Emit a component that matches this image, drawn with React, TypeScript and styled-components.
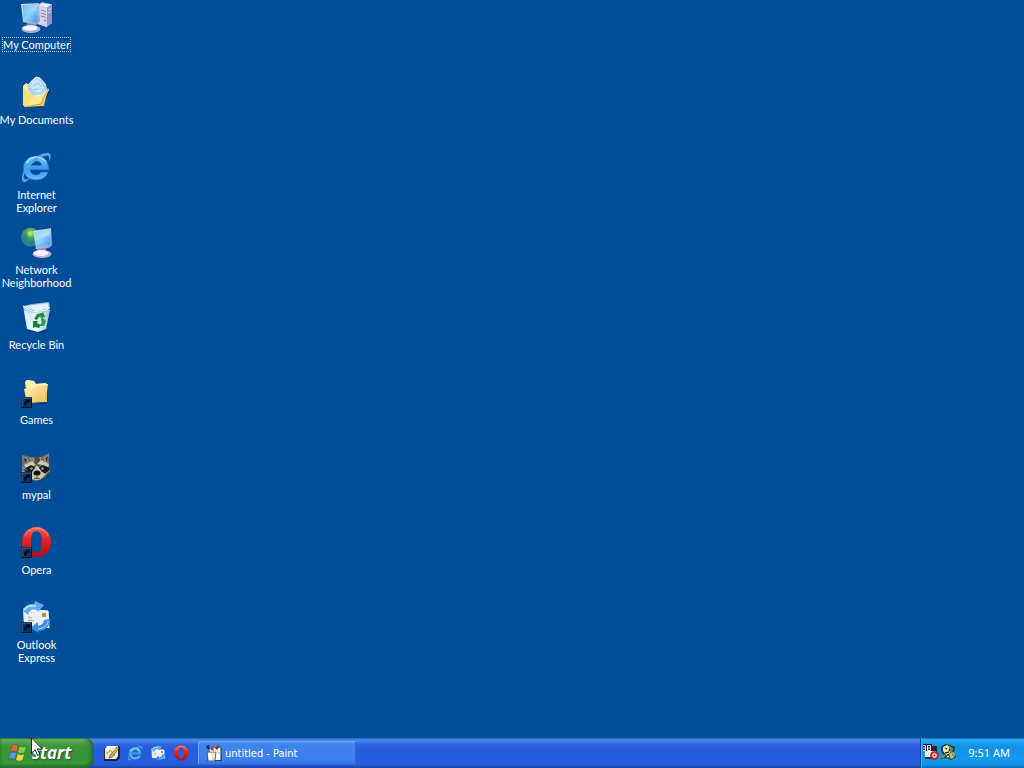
import React from "react";
import styled, { createGlobalStyle } from "styled-components";

const GlobalStyle = createGlobalStyle`
  * { box-sizing: border-box; }
  html, body { margin: 0; padding: 0; }
  body {
    font-family: Tahoma, "DejaVu Sans Condensed", "Noto Sans", sans-serif;
    font-size: 11px;
    line-height: 13px;
    color: #fff;
    background: #004e98;
  }
  button { font: inherit; color: inherit; border: 0; padding: 0; background: none; }
  svg { display: block; flex: none; }
`;

const Screen = styled.div`
  display: flex;
  flex-direction: column;
  min-height: 100vh;
  background: #004e98;
`;

const Desktop = styled.main`
  flex: 1;
`;

const IconColumn = styled.ul`
  list-style: none;
  margin: 0;
  padding: 0;
  display: grid;
  grid-auto-rows: 75px;
  justify-content: start;
  grid-template-columns: 73px;
`;

const Shortcut = styled.button`
  display: grid;
  grid-template-columns: 100%;
  justify-items: center;
  gap: 5px;
  width: 100%;
  padding-top: 1px;

  svg { margin-right: 1px; }
`;

const Label = styled.span<{ $focused?: boolean }>`
  font-family: Tahoma, Lato, sans-serif;
  white-space: pre;
  outline: ${(p) => (p.$focused ? "1px dotted #b9cfe6" : "none")};
`;

const Taskbar = styled.footer`
  display: flex;
  align-items: stretch;
  height: 30px;
  background: linear-gradient(
    #2c5cc0 0px, #4a8cf0 2px, #3a78ea 4px, #2a62e0 7px, #245cdc 12px,
    #265fe2 24px, #2459d4 27px, #1b44a8 30px
  );
`;

const StartButton = styled.button`
  display: flex;
  align-items: center;
  gap: 4px;
  width: 94px;
  padding: 0 0 0 8px;
  border-radius: 0 9px 9px 0;
  background: linear-gradient(
    #2f7a35 0px, #72b66f 2px, #51a250 4px, #3c963c 8px, #379337 20px,
    #3a9a3b 25px, #2c7c2e 30px
  );
  box-shadow: inset -4px 0 4px -1px #256b2a, inset 0 -2px 3px #24702a;
  font-family: "Open Sans", "Noto Sans", sans-serif;
  font-size: 17px;
  line-height: 24px;
  font-weight: 700;
  font-style: italic;
  text-shadow: 1px 1px 2px #1c4a1c;
`;

const QuickLaunch = styled.nav`
  display: flex;
  align-items: center;
  gap: 7px;
  padding: 0 8px 0 10px;
`;

const TaskArea = styled.div`
  flex: 1;
  display: flex;
  padding: 3px 0 3px 1px;
`;

const TaskButton = styled.button`
  display: flex;
  align-items: center;
  gap: 3px;
  width: 158px;
  padding-left: 8px;
  border-radius: 2px;
  background: linear-gradient(#5a9cf8, #3f84f0 4px, #3c80f0 19px, #3470e0);
  box-shadow: inset 1px 1px 0 #6aa5fa, inset -1px -1px 0 #2f67d8;
`;

const Tray = styled.section`
  display: flex;
  align-items: center;
  width: 104px;
  padding: 0 0 2px 2px;
  border-left: 1px solid #0b3f9c;
  background: linear-gradient(
    #0f6cc0 0px, #2fb4f8 2px, #179cf0 5px, #1290e8 9px, #149aee 23px,
    #128fe4 27px, #0f68b8 30px
  );
  box-shadow: inset 1px 0 0 #2cb8f4;
`;

const TrayIcons = styled.div`
  display: flex;
  gap: 1px;
`;

const Clock = styled.time`
  flex: 1;
  padding-right: 14px;
  text-align: right;
  white-space: nowrap;
  font-family: Tahoma, "Noto Sans", sans-serif;
`;

const Pointer = styled.div`
  position: fixed;
  left: 31px;
  bottom: 12px;
  pointer-events: none;
`;

const Defs = () => (
  <svg width="0" height="0" style={{ position: "absolute" }} aria-hidden="true">
    <defs>
      <linearGradient id="screen" x1="0" y1="0" x2="1" y2="1">
        <stop offset="0" stopColor="#3fa4f0" /><stop offset=".5" stopColor="#8ad4fc" /><stop offset="1" stopColor="#3a8ce8" />
      </linearGradient>
      <linearGradient id="metal" x1="0" y1="0" x2="1" y2="1">
        <stop offset="0" stopColor="#dfe6fb" /><stop offset="1" stopColor="#8d97c8" />
      </linearGradient>
      <linearGradient id="folder" x1="0" y1="0" x2="1" y2="1">
        <stop offset="0" stopColor="#fff3b4" /><stop offset="1" stopColor="#edbd57" />
      </linearGradient>
      <linearGradient id="ie" x1="0" y1="0" x2="0" y2="1">
        <stop offset="0" stopColor="#79c9fb" /><stop offset=".5" stopColor="#3b9df0" /><stop offset="1" stopColor="#63bdf8" />
      </linearGradient>
      <linearGradient id="opera" x1="0" y1="0" x2="0" y2="1">
        <stop offset="0" stopColor="#ff6b60" /><stop offset=".4" stopColor="#e82420" /><stop offset="1" stopColor="#b80c10" />
      </linearGradient>
      <radialGradient id="globe" cx=".5" cy=".3">
        <stop offset="0" stopColor="#c5f59c" /><stop offset=".5" stopColor="#46a83f" /><stop offset="1" stopColor="#2a7f8c" />
      </radialGradient>
      <linearGradient id="bin" x1="0" y1="0" x2="1" y2="0">
        <stop offset="0" stopColor="#9dccf4" /><stop offset=".45" stopColor="#f2faff" /><stop offset="1" stopColor="#9dc4ea" />
      </linearGradient>
    </defs>
  </svg>
);

const Svg = ({ size = 32, box = 32, children }: { size?: number; box?: number; children: React.ReactNode }) => (
  <svg width={size} height={size} viewBox={`0 0 ${box} ${box}`} aria-hidden="true">{children}</svg>
);

const ShortcutArrow = () => (
  <g>
    <path d="M1.500 21.500h10v10h-10z" fill="#0b3568" stroke="#03142c" />
    <path d="M4 29.500c0-3 1-4.500 3-5L6 23.500h4v4l-1.200-1.200c-1.800.4-2.600 1.400-2.800 3.200z" fill="#020b1c" />
    <path d="M2 31V22h9" fill="none" stroke="#5a82ae" strokeWidth=".7" />
  </g>
);

const ComputerIcon = () => (
  <Svg>
    <path d="M18 4l4-3 11 2.500v18L26 26l-8-3z" fill="#9ca6d6" />
    <path d="M18 4l4-2 10 1.500-5 3z" fill="#e8ecff" />
    <path d="M18 4l9 2.500V26l-9-3z" fill="#d6d3ee" />
    <path d="M27 6.500l5-3v18L27 26z" fill="#8f95ca" />
    <path d="M21 9l5 1.500M21 12l5 1.500M21 15l5 1.500" stroke="#7e83b8" />
    <circle cx="25" cy="19.500" r="1" fill="#7e6f9c" />
    <path d="M28 9l3-1.500M28 12l3-1.500" stroke="#d8def8" />
    <path d="M7 21l9 2v5H7z" fill="#7984b8" />
    <ellipse cx="11" cy="28" rx="9.500" ry="4" fill="#b0aed8" />
    <ellipse cx="10" cy="27" rx="7.500" ry="2.800" fill="#f4f2ff" />
    <path d="M1 3l18-1 1 18-3 4L3 21z" fill="url(#metal)" />
    <path d="M2.500 4.500L17.500 3.500l-.5 18-13-2.500z" fill="url(#screen)" />
    <path d="M2.500 4.500L17.500 3.500l-.4 7C12 9 8 12 3 14z" fill="#b0e2fd" opacity=".4" />
  </Svg>
);

const DocumentsIcon = () => (
  <Svg>
    <path d="M5 30l16 2 9-17-3-3z" fill="#03264f" opacity=".7" />
    <path d="M3 10l3-3 3 2 1 5 18-1-4 17-19 1-2-3z" fill="url(#folder)" />
    <path d="M8 9l4-5 4-3 4 1 6 7 1 4-4 8-9-1-6-6z" fill="#a8d6f4" />
    <path d="M10 9l4-5 3-1 5 4 2 5-4 5-6-1z" fill="#c5e6fa" />
    <path d="M8 9l5-5 3-3 4 1 6 7" fill="none" stroke="#e9f8ff" />
    <path d="M13 10l5-3 4 4M13 14l6-1" fill="none" stroke="#8dc3e8" />
    <path d="M3 12l11 8-9 11-2-2z" fill="#fbdd78" />
    <path d="M28 12l1 2-8 15-16 2 9-11 8-1z" fill="#ffe793" />
    <path d="M14 20l8-1 5-5" fill="none" stroke="#fff7c8" />
    <path d="M28 13l-7 15-16 3" fill="none" stroke="#d19a3c" />
  </Svg>
);

const IeGlyph = () => (
  <g>
    <path d="M16 5C8.500 5 3.500 10 3.500 17S8.500 29 16 29c6 0 10.500-3 12-8h-7c-1 2-2.600 3-5 3-3.500 0-5.500-2-5.800-5.200h18.600C29 10 24 5 16 5zm-5.700 9.300C10.800 11.600 12.800 10 16 10s5.200 1.600 5.600 4.300z" fill="url(#ie)" stroke="#1c68ba" strokeWidth=".6" />
    <path d="M3.500 31C-.5 28 3 18 11 10.500S28.500-.5 30.500 3.500c1 2-.4 5-2 7.500.6-3 1-5-.6-6C25 3.500 17 8 10.500 14.500S2.500 27 5 28c1.500.6 4-.6 6-2-2.500 3-5.800 6-7.500 5z" fill="#4ba3e2" />
    <path d="M7 12c2-4 5-6 9-6 4.500 0 7.500 1.800 9.500 4.500" fill="none" stroke="#b5e6ff" strokeWidth="1.200" />
  </g>
);
const IeIcon = ({ size }: { size?: number }) => <Svg size={size}><IeGlyph /></Svg>;

const NetworkIcon = () => (
  <Svg>
    <circle cx="10.500" cy="11" r="9.500" fill="url(#globe)" />
    <path d="M2 10c2-4 5-2 6 0s-2 3-1 6-3-1-5-6z" fill="#2d78c8" opacity=".45" />
    <path d="M17 20h9v7h-9z" fill="#8791bd" />
    <ellipse cx="22" cy="28" rx="9.500" ry="4" fill="#b8b3d6" />
    <ellipse cx="21" cy="27" rx="7.500" ry="3" fill="#f6f3fb" />
    <path d="M13 5l18-3 1 17-3 3-13 1z" fill="url(#metal)" />
    <path d="M14.500 6.500L29.500 4l.5 14.500L17 21z" fill="url(#screen)" />
    <path d="M14.500 6.500L29.500 4l.2 5.500C24 8 21 14 15.500 15z" fill="#c8eeff" opacity=".6" />
  </Svg>
);

const RecycleIcon = () => (
  <Svg>
    <path d="M8 30l17 2 5-20z" fill="#03264f" opacity=".5" />
    <path d="M3 5l8 4h19l-4 19-8 3L7 28z" fill="url(#bin)" />
    <path d="M3 5l9-2 17-2 1 7-3 2-15 2z" fill="#8fbbe6" />
    <path d="M5 5.500L13 4l15-2 1 5-2 1-12 2z" fill="#e2f2fd" />
    <path d="M3 5l10 6 14-2 3-3" fill="none" stroke="#fff" />
    <path d="M4 9l5 4 3 16-5-2z" fill="#fff" opacity=".55" />
    <path d="M14 18l3-5 5-1 1-1 2 5-5 1 1-2-2 1-2 3z" fill="#1d8e2e" />
    <path d="M22 16l4 4-2 5h-4l1-3h1l-1-3z" fill="#2aa038" />
    <path d="M13 20h5l-1 2 4 2-2 3-4-1-2 1z" fill="#18842a" />
  </Svg>
);

const FolderIcon = () => (
  <Svg>
    <path d="M6 27l21 1 1-18z" fill="#03264f" opacity=".6" />
    <path d="M5 6l2-2 7 1 2 3 10-1 1 2v17l-20 1z" fill="#e8b957" />
    <path d="M5 6l2-2 7 1 2 3 10-1 1 3L7 12z" fill="#fff0ae" />
    <path d="M4 13l5-1 5-1 2-2 12-1-2 17-19 2z" fill="url(#folder)" />
    <path d="M4.500 13.500l5-1 4-1 2-2 12-1" fill="none" stroke="#fff8cf" />
    <ShortcutArrow />
  </Svg>
);

const RaccoonIcon = () => (
  <Svg>
    <path d="M2 4l5 1 4 1h10l4-2 4-2v9l1 9-5 6-8 4-10-2-5-8z" fill="#766f61" />
    <path d="M3 5l5 3-3 6zM29 3l-6 4 4 6z" fill="#8f8a7a" />
    <path d="M4 7l3 2-2 3zM28 5l-3 3 2 3z" fill="#302c2c" />
    <path d="M15 5h4l2 8-4 3-3-3z" fill="#4a4945" />
    <path d="M4 14l8-4 4 4-4 1-6 2zM29 13l-8-4-4 4 5 1 6 2z" fill="#cfc9b5" />
    <path d="M4 18l7-4 5 3-3 6-6 1zM30 17l-7-3-5 3 3 6 7-1z" fill="#1c1e23" />
    <path d="M12 21l5-7 5 7 4 2-6 6h-6l-6-3z" fill="#c9c3b0" />
    <circle cx="11.500" cy="17.500" r="1.200" fill="#98a2a4" /><circle cx="22.500" cy="17.500" r="1.200" fill="#98a2a4" />
    <ellipse cx="17" cy="22" rx="3.500" ry="2.500" fill="#11151a" />
    <path d="M17 24v3M14 28c2-1 4-1 6 0" stroke="#5b564d" />
    <path d="M7 9l3 3M10 7l3 4M26 8l-3 4M2 20l5 2M30 20l-4 2M3 17l4 2M20 6l1 4M13 7l1 4" stroke="#b5af99" strokeWidth=".8" />
    <path d="M25 26l4-3-1 4zM19 29l5-1-4 3z" fill="#343632" />
    <ShortcutArrow />
  </Svg>
);

const OperaGlyph = () => (
  <g>
    <path fillRule="evenodd" d="M16.500 1C8 1 2 7.500 2 16s6 15 14.500 15S31 24.500 31 16 25 1 16.500 1zm0 4c4 0 5.500 4.500 5.500 11s-1.500 11-5.500 11S11 22.500 11 16s1.500-11 5.500-11z" fill="url(#opera)" />
    <path d="M5 10C7 5 11 2.500 16.500 2.500S26 5 28 10" fill="none" stroke="#ff9a8b" opacity=".7" />
  </g>
);
const OperaIcon = () => <Svg><OperaGlyph /><ShortcutArrow /></Svg>;

const MailGlyph = () => (
  <g>
    <path d="M3 8l25 2 1 17-25-1z" fill="#eaf0fb" />
    <path d="M3 8l25 2 1 17" fill="none" stroke="#fff" />
    <path d="M22 12h4v4h-4z" fill="#c38345" />
    <path d="M8 16l4 1M8 19l6 1" fill="none" stroke="#c59a6a" />
    <path d="M3 10C4 5 9 2 14 3l1-3 9 4-6 7-1-3C12 8 9 9 8 14z" fill="#5da9f4" />
    <path d="M4 9C7 5 11 4 16 5" fill="none" stroke="#c8eaff" strokeWidth="1.500" />
    <path d="M30 18c0 7-4 12-12 12l1 2-9-5 8-6v4c4-1 6-3 6-6z" fill="#3c8de8" />
    <path d="M28 20c0 5-4 7-10 8" fill="none" stroke="#a8d8ff" />
  </g>
);
const OutlookIcon = () => <Svg><MailGlyph /><ShortcutArrow /></Svg>;

const ShowDesktopIcon = () => (
  <Svg size={16} box={16}>
    <path d="M3 1h13v12l-3 3H0V4z" fill="#16284e" />
    <path d="M3 1h11v10l-2 3H1V4z" fill="#efe9c8" />
    <path d="M3 1h9L3 5H1z" fill="#fff" />
    <path d="M3 9c2-4 4-4 5-2s-3 3-1 4l4-1" fill="none" stroke="#6d8577" />
    <path d="M6 11L13 2l2 1-7 9-3 1z" fill="#e6b967" stroke="#574321" strokeWidth=".7" />
  </Svg>
);

const PaintIcon = () => (
  <Svg size={16} box={16}>
    <path d="M8 3h7v12H6z" fill="#fff" />
    <path d="M15 3v13H6" fill="none" stroke="#1b1d20" />
    <path d="M1 7h9l-1 9H2z" fill="#e9e5d6" stroke="#20242d" strokeWidth=".7" />
    <path d="M2 8h3l1 7H3z" fill="#fff" />
    <path d="M5 7L2 1M6 7L6 2M8 7l4-5" stroke="#e8e2c3" strokeWidth="1.600" />
    <path d="M0 1l3-1 1 4-2 1z" fill="#20242d" />
    <path d="M5 1h2v4H5z" fill="#d3332e" />
    <path d="M9 3l3-3 2 1-3 4z" fill="#7a3c16" />
    <path d="M11 6l3 1-1 3z" fill="#e4c25e" />
  </Svg>
);

const SchedulerIcon = () => (
  <Svg size={16} box={16}>
    <path d="M0 0h4v7H0zM4 0h5v7H4z" fill="#10131b" />
    <path d="M0 1.500h2.500v5H0M0 4h2M4.500 1.500h3v5h-3zM4.500 4h3" fill="none" stroke="#fff" />
    <path d="M9 2h5v6H9z" fill="#27222a" />
    <path d="M2 7h11v6H2z" fill="#f5f1f4" />
    <path d="M2 13h10v2H2z" fill="#342d3b" />
    <circle cx="11.500" cy="11.500" r="4" fill="#d8322b" stroke="#781512" strokeWidth=".7" />
    <circle cx="11.500" cy="11.500" r="2.200" fill="#fff" />
    <path d="M10.500 10.500h2v2h-2z" fill="#c61e18" />
  </Svg>
);

const AgentIcon = () => (
  <Svg size={16} box={16}>
    <path d="M1 3l4-3 5 1 5 2-1 6 2 4-5 3-4-2-6 1 2-5-2-3z" fill="#26382b" />
    <path d="M3 3l4-2 4 3-1 5-4 2-3-4z" fill="#e3e8bc" />
    <path d="M9 2l4 2-1 5-3-2zM2 10l4 1-2 3H1z" fill="#6c9155" />
    <path d="M5 4l2 1M9 5l1 2M5 9l4-1" stroke="#263923" strokeWidth="1.300" />
    <path d="M10 9l4-1 1 4-3 3-4-2z" fill="#b4bd79" />
    <path d="M6 12l3-1 1 2-3 1zM12 10l2 2" fill="#eef1cb" stroke="#253725" strokeWidth=".7" />
  </Svg>
);

const WindowsFlag = () => (
  <Svg size={20} box={20}>
    <g stroke="#1d5626" strokeWidth=".4">
      <path d="M3.800 2.500c2.200-1.500 4.300-1.400 6.500 0L8.700 9c-2.200-1.400-4.300-1.400-6.500 0z" fill="#ee6638" />
      <path d="M11.200 3c2.200 1.300 4.300 1.300 7 0L16.600 9.500c-2.400 1.300-4.600 1.300-7 0z" fill="#8cce45" />
      <path d="M2 10.200c2.200-1.400 4.300-1.400 6.500 0l-1.600 6.300c-2.200-1.400-4.300-1.400-6.500 0z" fill="#5e91f0" />
      <path d="M9.400 10.700c2.400 1.300 4.600 1.300 7 0L14.800 17c-2.400 1.300-4.600 1.300-7 0z" fill="#f9d73e" />
    </g>
  </Svg>
);

const shortcuts = [
  { label: "My Computer", icon: <ComputerIcon />, focused: true },
  { label: "My Documents", icon: <DocumentsIcon /> },
  { label: "Internet\nExplorer", icon: <IeIcon /> },
  { label: "Network\nNeighborhood", icon: <NetworkIcon /> },
  { label: "Recycle Bin", icon: <RecycleIcon /> },
  { label: "Games", icon: <FolderIcon /> },
  { label: "mypal", icon: <RaccoonIcon /> },
  { label: "Opera", icon: <OperaIcon /> },
  { label: "Outlook\nExpress", icon: <OutlookIcon /> },
];

const quickLaunch = [
  { name: "Show Desktop", icon: <ShowDesktopIcon /> },
  { name: "Internet Explorer", icon: <IeIcon size={16} /> },
  { name: "Outlook Express", icon: <Svg size={16}><MailGlyph /></Svg> },
  { name: "Opera", icon: <Svg size={16}><OperaGlyph /></Svg> },
];

export default function App() {
  return (
    <Screen>
      <GlobalStyle />
      <Defs />
      <Desktop>
        <IconColumn>
          {shortcuts.map((s) => (
            <li key={s.label}>
              <Shortcut type="button">
                {s.icon}
                <Label $focused={s.focused}>{s.label}</Label>
              </Shortcut>
            </li>
          ))}
        </IconColumn>
      </Desktop>
      <Taskbar>
        <StartButton type="button"><WindowsFlag />start</StartButton>
        <QuickLaunch aria-label="Quick Launch">
          {quickLaunch.map((q) => (
            <button key={q.name} type="button" aria-label={q.name}>{q.icon}</button>
          ))}
        </QuickLaunch>
        <TaskArea>
          <TaskButton type="button"><PaintIcon />untitled - Paint</TaskButton>
        </TaskArea>
        <Tray aria-label="Notification area">
          <TrayIcons><SchedulerIcon /><AgentIcon /></TrayIcons>
          <Clock>9:51 AM</Clock>
        </Tray>
      </Taskbar>
      <Pointer>
        <svg width="12" height="19" viewBox="0 0 12 19" aria-hidden="true">
          <path d="M.5 .8v15.400l3.600-3.500 2.500 5.600 2.200-1-2.500-5.300h4.900z" fill="#fff" stroke="#000" strokeWidth=".8" />
        </svg>
      </Pointer>
    </Screen>
  );
}
